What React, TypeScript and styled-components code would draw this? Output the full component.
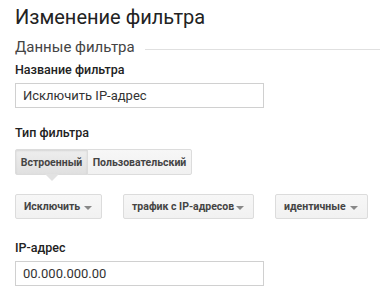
import styled, { createGlobalStyle } from "styled-components";

const Global = createGlobalStyle`
  body {
    margin: 0;
    background: #fff;
    font-family: Roboto, "Liberation Sans", Arial, sans-serif;
    color: #222;
  }
`;

const Page = styled.div`
  padding: 4px 15px 0 15px;
  width: 380px;
  box-sizing: border-box;
`;

const Title = styled.h1`
  margin: 0;
  font-size: 20px;
  font-weight: 400;
  line-height: 26px;
  color: #222;
`;

const Section = styled.div`
  display: flex;
  align-items: center;
  gap: 10px;
  margin: 7px -15px 0 0;
`;

const SectionTitle = styled.span`
  font-size: 15px;
  line-height: 20px;
  color: #444;
`;

const Rule = styled.div`
  flex: 1;
  height: 1px;
  background: #e0e0e0;
  margin-top: 4px;
`;

const Label = styled.div<{ $top: number }>`
  margin-top: ${(p) => p.$top}px;
  font-size: 12.5px;
  font-weight: 500;
  line-height: 16px;
  color: #222;
`;

const Field = styled.div`
  margin-top: 5px;
  width: 249px;
  height: 25px;
  box-sizing: border-box;
  border: 1px solid #d0d0d0;
  padding: 0 7px;
  display: flex;
  align-items: center;
  font-size: 13px;
  color: #333;
`;

const Tabs = styled.div`
  margin-top: 8px;
  display: flex;
`;

const Tab = styled.div<{ $active?: boolean; $w: number }>`
  position: relative;
  flex-shrink: 0;
  width: ${(p) => p.$w}px;
  height: 26px;
  box-sizing: border-box;
  display: flex;
  align-items: center;
  justify-content: center;
  white-space: nowrap;
  font-family: Roboto, "Liberation Sans", Arial, sans-serif;
  font-size: 10.5px;
  font-weight: 700;
  color: #444;
  border: 1px solid #dcdcdc;
  margin-left: ${(p) => (p.$active ? 0 : -1)}px;
  background: ${(p) =>
    p.$active ? "linear-gradient(#eeeeee, #e0e0e0)" : "linear-gradient(#f7f7f7, #f1f1f1)"};
  box-shadow: ${(p) => (p.$active ? "inset 0 1px 2px rgba(0,0,0,0.1)" : "none")};
  border-radius: ${(p) => (p.$active ? "2px 0 0 2px" : "0 2px 2px 0")};
`;

const Pointer = styled.span`
  position: absolute;
  left: 29px;
  bottom: -7px;
  width: 0;
  height: 0;
  border-left: 7px solid transparent;
  border-right: 7px solid transparent;
  border-top: 7px solid #e2e2e2;
`;

const Selects = styled.div`
  margin-top: 19px;
  display: flex;
  gap: 21px;
`;

const Select = styled.div<{ $w: number }>`
  flex-shrink: 0;
  width: ${(p) => p.$w}px;
  height: 25px;
  box-sizing: border-box;
  border: 1px solid #dcdcdc;
  border-radius: 2px;
  background: linear-gradient(#f7f7f7, #f1f1f1);
  display: flex;
  align-items: center;
  justify-content: space-between;
  padding: 0 9px 0 8px;
  white-space: nowrap;
  font-family: Roboto, "Liberation Sans", Arial, sans-serif;
  font-size: 10.5px;
  font-weight: 700;
  color: #444;
`;

const Caret = styled.span`
  width: 0;
  height: 0;
  border-left: 4px solid transparent;
  border-right: 4px solid transparent;
  border-top: 4px solid #888;
  margin-top: 2px;
`;

export default function App() {
  return (
    <Page>
      <Global />
      <Title>Изменение фильтра</Title>
      <Section>
        <SectionTitle>Данные фильтра</SectionTitle>
        <Rule />
      </Section>
      <Label $top={5}>Название фильтра</Label>
      <Field>Исключить IP-адрес</Field>
      <Label $top={17}>Тип фильтра</Label>
      <Tabs>
        <Tab $active $w={73}>
          Встроенный
          <Pointer />
        </Tab>
        <Tab $w={105}>Пользовательский</Tab>
      </Tabs>
      <Selects>
        <Select $w={87}>
          Исключить
          <Caret />
        </Select>
        <Select $w={131}>
          трафик с IP-адресов
          <Caret />
        </Select>
        <Select $w={93}>
          идентичные
          <Caret />
        </Select>
      </Selects>
      <Label $top={21}>IP-адрес</Label>
      <Field>00.000.000.00</Field>
    </Page>
  );
}
